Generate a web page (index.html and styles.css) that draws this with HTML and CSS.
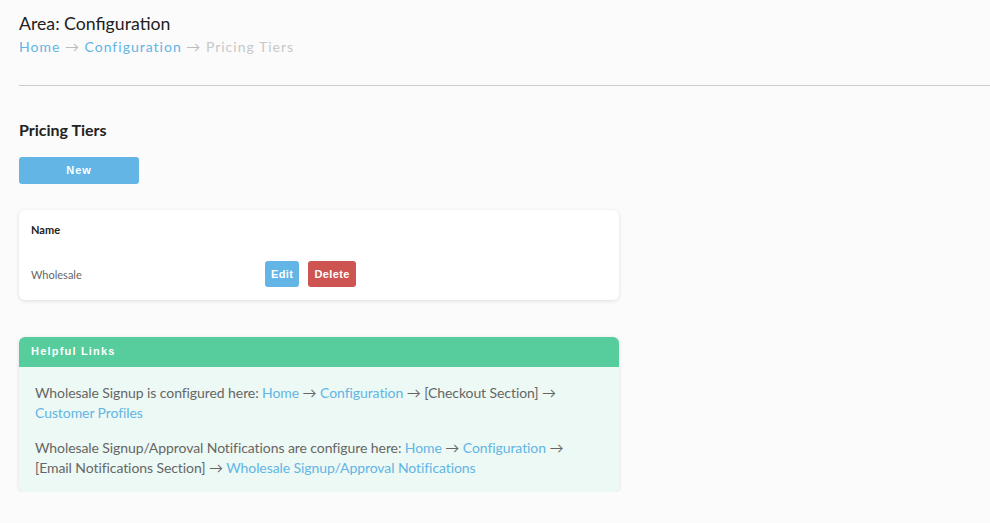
FILE: index.html
```html
<!DOCTYPE html>
<html lang="en">
<head>
	<meta charset="UTF-8">
	<title>Pricing Tiers</title>
	<link rel="stylesheet" href="styles.css">
</head>
<body>
	<div class="page-head">
		<h1>Area: Configuration</h1>
		<div class="crumbs">
			<a href="#">Home</a> <span class="arr">&rarr;</span> <a href="#">Configuration</a> <span class="arr">&rarr;</span> <span class="current">Pricing Tiers</span>
		</div>
	</div>
	<hr class="divider">
	<div class="main">
		<h2>Pricing Tiers</h2>
		<a class="btn btn-new" href="#">New</a>
		<div class="card">
			<div class="row head">
				<div class="col-name">Name</div>
			</div>
			<div class="row">
				<div class="col-name">Wholesale</div>
				<div class="col-actions">
					<a class="btn btn-sm btn-blue" href="#">Edit</a>
					<a class="btn btn-sm btn-red" href="#">Delete</a>
				</div>
			</div>
		</div>
		<div class="panel">
			<div class="panel-title">Helpful Links</div>
			<div class="panel-body">
				<p>Wholesale Signup is configured here: <a href="#">Home</a> &rarr; <a href="#">Configuration</a> &rarr; [Checkout Section] &rarr; <a href="#">Customer Profiles</a></p>
				<p>Wholesale Signup/Approval Notifications are configure here: <a href="#">Home</a> &rarr; <a href="#">Configuration</a> &rarr; [Email Notifications Section] &rarr; <a href="#">Wholesale Signup/Approval Notifications</a></p>
			</div>
		</div>
	</div>
</body>
</html>
```
FILE: styles.css
```css
body,h1,h2,p{margin:0;padding:0;}
body{
	background:#fbfbfb;
	font-family:Lato,"Open Sans",sans-serif;
	color:#333;
}
a{
	color:#62b5e5;
	text-decoration:none;
}
.page-head{
	padding:12px 19px 0;
}
h1{
	font-size:17.7px;
	font-weight:normal;
	line-height:23px;
	color:#222;
}
.crumbs{
	margin-top:1px;
	font-size:14px;
	line-height:22px;
	letter-spacing:1px;
}
.crumbs .arr{
	color:#bbb;
}
.crumbs .current{
	color:#c8c8c8;
}
.divider{
	margin:27px 0 0 19px;
	border:0;
	border-top:1px solid #ccc;
}
.main{
	padding:0 19px;
	width:600px;
}
h2{
	margin-top:34px;
	font-size:16px;
	line-height:20px;
	font-weight:bold;
	color:#222;
}
.btn{
	display:inline-block;
	font-family:"Liberation Sans",Arial,sans-serif;
	font-weight:bold;
	color:#fff;
	font-size:11px;
	letter-spacing:1px;
	text-align:center;
	border-radius:3px;
}
.btn-new{
	display:block;
	margin-top:17px;
	width:120px;
	height:27px;
	line-height:27px;
	background:#62b5e5;
}
.card{
	margin-top:26px;
	background:#fff;
	border-radius:6px;
	box-shadow:0 1px 4px rgba(0,0,0,0.12);
	padding:11px 12px 0;
	height:79px;
}
.row{
	display:flex;
	align-items:center;
	font-size:11px;
}
.row.head{
	height:16px;
	font-weight:bold;
	color:#222;
}
.row + .row{
	margin-top:24px;
	color:#666;
}
.col-name{
	width:234px;
}
.col-actions{
	display:flex;
	gap:9px;
}
.btn-sm{
	height:26px;
	line-height:26px;
	padding:0 6px;
	letter-spacing:0.4px;
}
.btn-blue{
	background:#62b5e5;
}
.btn-red{
	background:#cd5450;
}
.panel{
	margin-top:37px;
	border-radius:6px;
	overflow:hidden;
	box-shadow:0 1px 4px rgba(0,0,0,0.12);
}
.panel-title{
	height:30px;
	line-height:28px;
	padding:0 12px;
	background:#57cc9c;
	color:#fff;
	font-family:"Liberation Sans",Arial,sans-serif;
	font-weight:bold;
	font-size:11px;
	letter-spacing:1.2px;
}
.panel-body{
	background:#edf9f4;
	padding:16px 16px 14px;
	font-size:14px;
	line-height:20px;
	letter-spacing:-0.08px;
	color:#666;
}
.panel-body p + p{
	margin-top:15px;
}
.panel-body a{
	color:#62b5e5;
}
```
